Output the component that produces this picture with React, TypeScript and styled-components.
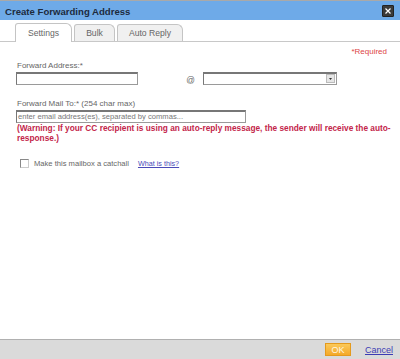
import styled, { createGlobalStyle } from "styled-components";

const Global = createGlobalStyle`
  html, body {
    margin: 0;
    padding: 0;
    background: #fff;
  }
  body {
    font-family: "Liberation Sans", Arial, sans-serif;
  }
`;

const Dialog = styled.div`
  width: 400px;
  height: 359px;
  display: flex;
  flex-direction: column;
  background: #fff;
  overflow: hidden;
`;

const TitleBar = styled.div`
  height: 19px;
  border-top: 1px solid #a9a9a9;
  background: #6eaae8;
  display: flex;
  align-items: center;
  justify-content: space-between;
  padding: 0 6px 0 5px;
`;

const Title = styled.div`
  font-size: 9.6px;
  font-weight: bold;
  color: #1d2b3d;
  padding-top: 2px;
`;

const CloseBtn = styled.div`
  width: 10px;
  height: 10px;
  background: #3a3a3a;
  border-radius: 1px;
  border: 1px solid #222;
  display: flex;
  align-items: center;
  justify-content: center;
  margin-top: 1px;
`;

const TabRow = styled.div`
  display: flex;
  gap: 2px;
  padding: 3px 0 0 15px;
  border-bottom: 1px solid #c8c8c8;
  height: 18px;
`;

const Tab = styled.div<{ $active?: boolean; $w: number }>`
  width: ${(p) => p.$w}px;
  height: ${(p) => (p.$active ? 19 : 17)}px;
  box-sizing: border-box;
  border: 1px solid #c4c4c4;
  border-bottom: none;
  border-radius: 3px 6px 0 0;
  background: ${(p) => (p.$active ? "#fff" : "#f0f0f0")};
  font-size: 8.6px;
  color: #666;
  display: flex;
  align-items: center;
  justify-content: center;
  margin-top: ${(p) => (p.$active ? 0 : 1)}px;
`;

const Content = styled.div`
  flex: 1;
  padding: 5px 0 0 16px;
`;

const Required = styled.div`
  text-align: right;
  font-size: 8px;
  color: #d44;
  padding-right: 13px;
  height: 10px;
`;

const Label = styled.div`
  font-size: 8px;
  color: #666;
  margin-left: 1px;
  height: 12px;
  line-height: 12px;
`;

const Row = styled.div`
  display: flex;
  align-items: center;
`;

const TextBox = styled.div<{ $w: number }>`
  width: ${(p) => p.$w}px;
  height: 13px;
  box-sizing: border-box;
  border: 1px solid #9a9a9a;
  border-top: 2px solid #777;
  border-left-color: #777;
  background: #fff;
  font-size: 7.6px;
  color: #777;
  padding-left: 1px;
  line-height: 10px;
  white-space: nowrap;
  overflow: hidden;
`;

const At = styled.div`
  font-size: 8.5px;
  color: #666;
  width: 65px;
  box-sizing: border-box;
  text-align: right;
  padding: 2px 8px 0 0;
`;

const Select = styled.div`
  width: 134px;
  height: 13px;
  box-sizing: border-box;
  border: 1px solid #9a9a9a;
  border-top: 2px solid #777;
  border-left-color: #777;
  display: flex;
  justify-content: flex-end;
  align-items: stretch;
  padding: 0 1px 1px 0;
`;

const DropBtn = styled.div`
  width: 9px;
  background: #e6e6e6;
  border: 1px solid #bbb;
  box-sizing: border-box;
  display: flex;
  align-items: center;
  justify-content: center;
`;

const Section = styled.div<{ $top: number }>`
  margin-top: ${(p) => p.$top}px;
`;

const Warning = styled.div`
  font-size: 8.3px;
  font-weight: bold;
  color: #c3254a;
  width: 378px;
  line-height: 10px;
  margin-left: 1px;
`;

const CheckRow = styled.div`
  display: flex;
  align-items: center;
  height: 10px;
  margin: 15px 0 0 4px;
  font-size: 7.6px;
  color: #666;
`;

const Check = styled.div`
  width: 7px;
  height: 7px;
  border: 1px solid #888;
  border-right-color: #ccc;
  border-bottom-color: #ccc;
  margin-right: 5px;
`;

const Link = styled.a`
  color: #4a4ab8;
  text-decoration: underline;
  font-size: 7.2px;
  margin-left: 9px;
`;

const Footer = styled.div`
  height: 19px;
  border-top: 1px solid #b0b0b0;
  background: #dadada;
  display: flex;
  align-items: center;
  justify-content: flex-end;
  padding-right: 7px;
  gap: 14px;
`;

const OkBtn = styled.div`
  width: 26px;
  height: 13px;
  box-sizing: border-box;
  background: linear-gradient(#fbc95a, #f4a928);
  border: 1px solid #e49a1d;
  font-size: 9px;
  color: #fff6e0;
  display: flex;
  align-items: center;
  justify-content: center;
`;

const Cancel = styled.a`
  font-size: 9px;
  color: #3c3cb4;
  text-decoration: underline;
`;

export default function App() {
  return (
    <>
      <Global />
      <Dialog>
        <TitleBar>
          <Title>Create Forwarding Address</Title>
          <CloseBtn>
            <svg width="6" height="6" viewBox="0 0 6 6">
              <path d="M0.5 0.5L5.5 5.5M5.5 0.5L0.5 5.5" stroke="#fff" strokeWidth="1.2" />
            </svg>
          </CloseBtn>
        </TitleBar>
        <TabRow>
          <Tab $active $w={57}>Settings</Tab>
          <Tab $w={41}>Bulk</Tab>
          <Tab $w={66}>Auto Reply</Tab>
        </TabRow>
        <Content>
          <Required>*Required</Required>
          <Section $top={3}>
            <Label>Forward Address:*</Label>
            <Row>
              <TextBox $w={122} />
              <At>@</At>
              <Select>
                <DropBtn>
                  <svg width="3" height="2" viewBox="0 0 3 2">
                    <path d="M0 0H3L1.5 2Z" fill="#333" />
                  </svg>
                </DropBtn>
              </Select>
            </Row>
          </Section>
          <Section $top={13}>
            <Label>Forward Mail To:* (254 char max)</Label>
            <TextBox $w={230}>enter email address(es), separated by commas...</TextBox>
            <Warning>
              (Warning: If your CC recipient is using an auto-reply message, the sender will receive the auto-response.)
            </Warning>
          </Section>
          <CheckRow>
            <Check />
            Make this mailbox a catchall
            <Link>What is this?</Link>
          </CheckRow>
        </Content>
        <Footer>
          <OkBtn>OK</OkBtn>
          <Cancel>Cancel</Cancel>
        </Footer>
      </Dialog>
    </>
  );
}
